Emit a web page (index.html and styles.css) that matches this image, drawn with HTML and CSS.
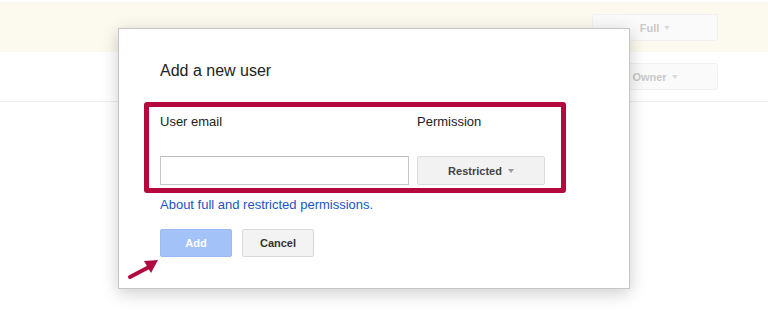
FILE: index.html
```html
<!DOCTYPE html>
<html>
<head>
<meta charset="utf-8">
<link rel="stylesheet" href="styles.css">
</head>
<body>
<div class="page">
  <div class="row row-cream">
    <div class="bg-btn">Full <span class="caret"></span></div>
  </div>
  <div class="row row-white">
    <div class="bg-btn">Owner <span class="caret"></span></div>
  </div>

  <div class="dialog">
    <h1 class="title">Add a new user</h1>
    <div class="fields">
      <div class="col col-email">
        <div class="label">User email</div>
        <input class="email" type="text">
      </div>
      <div class="col col-perm">
        <div class="label">Permission</div>
        <div class="btn btn-perm">Restricted <span class="caret dark"></span></div>
      </div>
    </div>
    <a class="link" href="#">About full and restricted permissions.</a>
    <div class="actions">
      <div class="btn btn-add">Add</div>
      <div class="btn btn-cancel">Cancel</div>
    </div>
    <div class="highlight"></div>
    <svg class="arrow" width="40" height="30" viewBox="0 0 40 30">
      <line x1="3" y1="25" x2="24" y2="14" stroke="#b00a40" stroke-width="4" stroke-linecap="round"/>
      <polygon points="31,8 17,9 24,21" fill="#b00a40"/>
    </svg>
  </div>
</div>
</body>
</html>
```

FILE: styles.css
```css
* { box-sizing: border-box; }
html, body { margin: 0; padding: 0; background: #fff; }
body { font-family: "Liberation Sans", Arial, sans-serif; width: 768px; height: 334px; overflow: hidden; }
.page { position: relative; padding-top: 2px; }

.row { display: flex; justify-content: flex-end; padding-right: 50px; }
.row-cream { background: #fcf9ee; height: 50px; align-items: flex-start; padding-top: 12px; }
.row-white { height: 50px; border-bottom: 1px solid #eeeeee; padding-top: 11px; }

.bg-btn {
  width: 126px; height: 27px;
  background: #fafafa; border: 1px solid #f1f1f1; border-radius: 2px;
  color: #c9c9c9; font-size: 11px; font-weight: bold;
  display: flex; align-items: center; justify-content: center; gap: 5px;
}
.caret { width: 0; height: 0; border-left: 3.5px solid transparent; border-right: 3.5px solid transparent; border-top: 4px solid #dadada; }
.caret.dark { border-top-color: #9a9a9a; }

.dialog {
  position: absolute; left: 118px; top: 28px;
  width: 512px; height: 261px;
  background: #fff; border: 1px solid #c6c6c6;
  box-shadow: 0 4px 16px rgba(0,0,0,0.2);
  padding: 32px 0 0 41px;
  display: flex; flex-direction: column; align-items: flex-start;
}
.title { margin: 0; font-size: 16px; font-weight: normal; line-height: 20px; color: #222; }

.fields { display: flex; gap: 8px; margin-top: 33px; }
.col { display: flex; flex-direction: column; }
.col-email { width: 249px; }
.col-perm { width: 128px; }
.label { font-size: 13px; line-height: 16px; color: #222; height: 16px; margin-bottom: 26px; }
.email { width: 249px; height: 29px; border: 1px solid #c8c8c8; border-top-color: #bcbcbc; background: #fff; padding: 0; margin: 0; }

.btn {
  height: 29px; border-radius: 2px; font-size: 11px; font-weight: bold;
  display: flex; align-items: center; justify-content: center; gap: 6px;
}
.btn-perm { width: 128px; background: #f2f2f2; border: 1px solid #dcdcdc; color: #444; }

.link { margin-top: 12px; font-size: 13px; line-height: 16px; color: #1a55c0; text-decoration: none; }

.actions { display: flex; gap: 10px; margin-top: 16px; }
.btn-add { width: 72px; height: 28px; background: #a3c3f8; border: 1px solid #9abcf2; color: #fff; }
.btn-cancel { width: 72px; height: 28px; background: #f3f3f3; border: 1px solid #d8d8d8; color: #333; }

.highlight {
  position: absolute; left: 25px; top: 73px;
  width: 422px; height: 91px;
  border: 5px solid #b5083f; border-radius: 3px;
}
.arrow { position: absolute; left: 8px; top: 223px; }
```
